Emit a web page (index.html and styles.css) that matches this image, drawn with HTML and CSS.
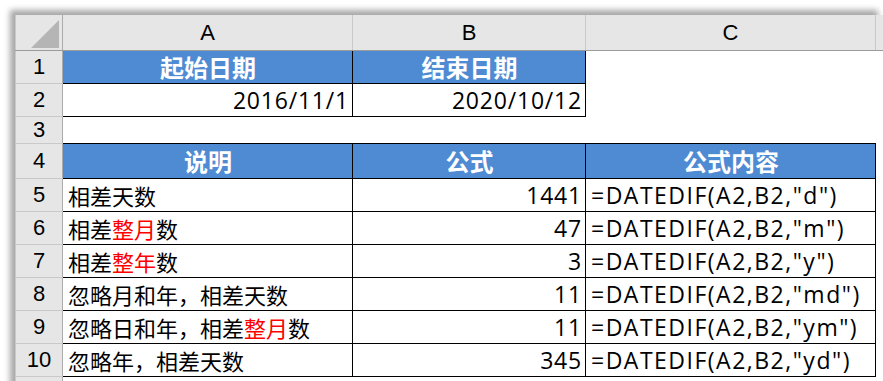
FILE: index.html
```html
<!DOCTYPE html>
<html lang="zh-CN">

<head>
    <meta charset="UTF-8">
    <meta name="viewport" content="width=device-width, initial-scale=1.0">
    <link rel="stylesheet" href="styles.css">

    <title>DATEDIF 用法</title>
</head>

<body>
    <div class="sheet">
        <table class="grid">
            <colgroup>
                <col class="col-row">
                <col class="col-a">
                <col class="col-b">
                <col class="col-c">
                <col class="col-d">
            </colgroup>
            <tr class="head">
                <th class="corner">
                    <svg width="28" height="28" viewBox="0 0 28 28"><polygon points="28,0 28,28 0,28" fill="#b5b5b5"/></svg>
                </th>
                <th>A</th>
                <th>B</th>
                <th>C</th>
                <th class="last"></th>
            </tr>
            <tr class="r1">
                <th>1</th>
                <td class="box title">起始日期</td>
                <td class="box title">结束日期</td>
                <td></td>
                <td></td>
            </tr>
            <tr class="r2">
                <th>2</th>
                <td class="box num">2016/11/1</td>
                <td class="box num">2020/10/12</td>
                <td></td>
                <td></td>
            </tr>
            <tr class="r3">
                <th>3</th>
                <td></td>
                <td></td>
                <td></td>
                <td></td>
            </tr>
            <tr class="r4">
                <th>4</th>
                <td class="box title">说明</td>
                <td class="box title">公式</td>
                <td class="box title">公式内容</td>
                <td></td>
            </tr>
            <tr>
                <th>5</th>
                <td class="box">相差天数</td>
                <td class="box num">1441</td>
                <td class="box code">=DATEDIF(A2,B2,"d")</td>
                <td></td>
            </tr>
            <tr>
                <th>6</th>
                <td class="box">相差<span class="red">整月</span>数</td>
                <td class="box num">47</td>
                <td class="box code">=DATEDIF(A2,B2,"m")</td>
                <td></td>
            </tr>
            <tr>
                <th>7</th>
                <td class="box">相差<span class="red">整年</span>数</td>
                <td class="box num">3</td>
                <td class="box code">=DATEDIF(A2,B2,"y")</td>
                <td></td>
            </tr>
            <tr>
                <th>8</th>
                <td class="box">忽略月和年，相差天数</td>
                <td class="box num">11</td>
                <td class="box code">=DATEDIF(A2,B2,"md")</td>
                <td></td>
            </tr>
            <tr>
                <th>9</th>
                <td class="box">忽略日和年，相差<span class="red">整月</span>数</td>
                <td class="box num">11</td>
                <td class="box code">=DATEDIF(A2,B2,"ym")</td>
                <td></td>
            </tr>
            <tr>
                <th>10</th>
                <td class="box">忽略年，相差天数</td>
                <td class="box num">345</td>
                <td class="box code">=DATEDIF(A2,B2,"yd")</td>
                <td></td>
            </tr>
            <tr>
                <th></th>
                <td></td>
                <td></td>
                <td></td>
                <td></td>
            </tr>
        </table>
    </div>
</body>

</html>
```

FILE: styles.css
```css
html,
body {
    margin: 0;
    height: 100%;
    overflow: hidden;
    background-color: #fff;
}

.sheet {
    margin: 15px 0 0 15px;
    box-shadow: -5px -5px 6px rgba(0, 0, 0, 0.35);
    background-color: #fff;
}

.grid {
    table-layout: fixed;
    border-collapse: collapse;
    width: 880px;
    font-family: "Noto Sans CJK SC", sans-serif;
    font-size: 22px;
    color: #000;
}

.col-row { width: 47px; }
.col-a { width: 290px; }
.col-b { width: 233px; }
.col-c { width: 290px; }
.col-d { width: 20px; }

th {
    background-color: #e6e6e6;
    font-family: "Liberation Sans", Arial, sans-serif;
    font-weight: normal;
    font-size: 22px;
    border: 1px solid #c9c9c9;
    padding: 0;
    text-align: center;
}

tr > th:first-child {
    border-right-color: #ababab;
}

.head th {
    height: 33px;
    border-top: none;
    border-bottom: 1px solid #9c9c9c;
}

.head .corner {
    text-align: right;
    vertical-align: bottom;
    padding: 0 3px 2px 0;
    line-height: 0;
}

.head .last {
    border-right: none;
}

tr {
    height: 33px;
}

tr.r3 {
    height: 26px;
}

tr.r4 {
    height: 35px;
}

td {
    padding: 0 4px 0 5px;
    border: none;
    white-space: nowrap;
    overflow: hidden;
    line-height: 30px;
}

td.box {
    border: 1px solid #000;
}

td.title {
    background-color: #4f8bd3;
    color: #fff;
    font-size: 24px;
    font-weight: bold;
    text-align: center;
}

/* 数字和公式用较宽的西文字体 */
td.num,
td.code {
    font-family: "Open Sans", "Noto Sans CJK SC", sans-serif;
    font-size: 23px;
    letter-spacing: 0.8px;
}

td.code {
    letter-spacing: 1.5px;
}

td.num {
    text-align: right;
    padding-right: 3px;
}

.red {
    color: #ff0000;
}
```
